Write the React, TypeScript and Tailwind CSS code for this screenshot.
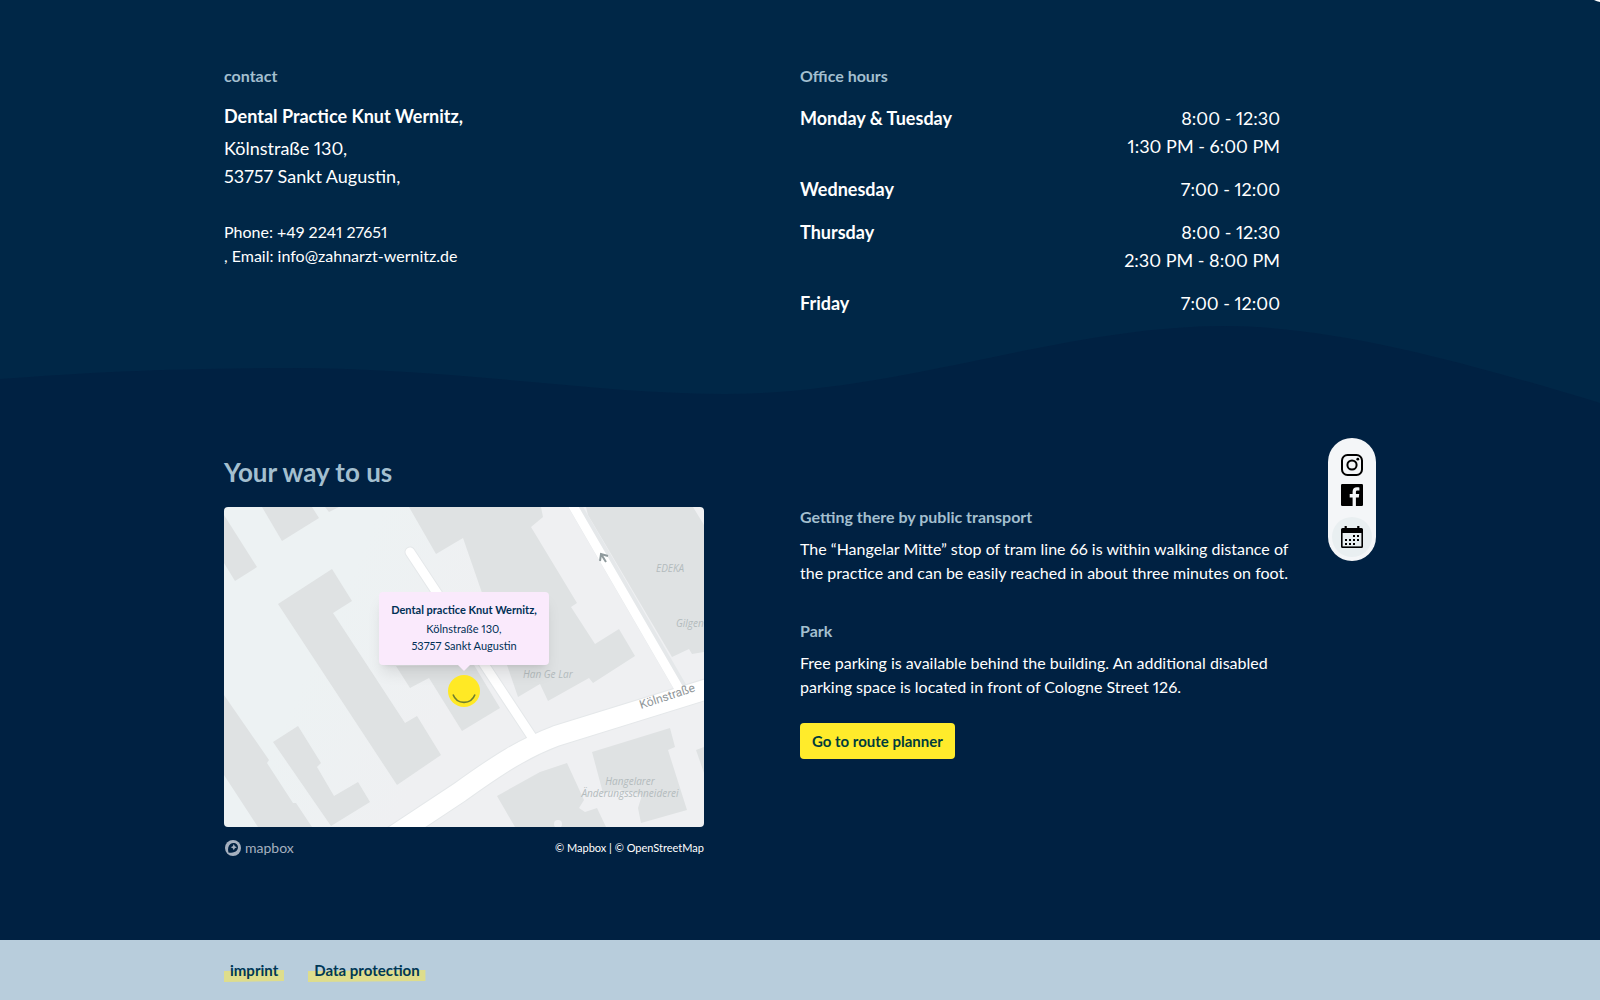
import type { ReactNode } from "react";

const hours = [
  { day: "Monday & Tuesday", times: ["8:00 - 12:30", "1:30 PM - 6:00 PM"] },
  { day: "Wednesday", times: ["7:00 - 12:00"] },
  { day: "Thursday", times: ["8:00 - 12:30", "2:30 PM - 8:00 PM"] },
  { day: "Friday", times: ["7:00 - 12:00"] },
];

const buildings = [
  "0,8 33,60 11,74 0,56",
  "38,0 88,0 95,11 58,34",
  "101,0 115,0 105,5",
  "54,97 108,62 128,94 109,106 181,216 193,209 217,248 173,278",
  "0,188 45,253 43,256 69,296 72,296 88,320 34,320 0,268",
  "49,235 74,219 97,256 93,260 110,289 134,275 146,295 107,319",
  "185,0 212,47 239,31 294,190 316,177 324,194 365,171 369,176 411,149 395,122 371,137 347,100 353,96 307,20 319,10 317,0",
  "172,159 186,181 205,171 238,224 276,201 250,158",
  "362,0 469,0 480,18 480,145 468,147 465,142 448,150 364,8",
  "273,289 316,265 343,256 360,293 355,301 361,305 373,301 382,320 291,320",
  "368,245 446,221 451,240 444,243 463,303 417,316 414,301 418,288 396,283 379,286",
  "472,243 480,240 480,266",
];

function SmallHeading({ children }: { children: ReactNode }) {
  return (
    <h3 className="text-base leading-6 font-bold text-[#a3bfcf]">
      {children}
    </h3>
  );
}

function StreetMap() {
  return (
    <svg
      viewBox="0 0 480 320"
      preserveAspectRatio="xMidYMid slice"
      className="block h-full w-full rounded"
      aria-hidden="true"
    >
      <defs>
        <linearGradient id="ground" x1="0" y1="0" x2="1" y2="0.3">
          <stop offset="0.3" stopColor="#edf2f3" />
          <stop offset="0.6" stopColor="#eff0f2" />
        </linearGradient>
      </defs>
      <rect width="480" height="320" fill="url(#ground)" />
      {buildings.map((points) => (
        <polygon key={points} points={points} fill="#dfe2e3" />
      ))}
      <circle cx="334" cy="317" r="4" fill="#eff0f2" />
      <g fill="none" strokeLinecap="round">
        <g stroke="#e5e8ea">
          <path d="M186 45L308 230" strokeWidth="11" />
          <path d="M347 -8L456 180" strokeWidth="13" />
          <path d="M165 332L236 285C275 257 300 241 332 229L490 180" strokeWidth="22" />
        </g>
        <g stroke="#ffffff">
          <path d="M186 45L308 230" strokeWidth="9" />
          <path d="M345 -8L454 180" strokeWidth="9" />
          <path d="M165 332L236 285C275 257 300 241 332 229L490 180" strokeWidth="20" />
        </g>
      </g>
      <path
        d="M382 55L377 47M376 54L377 47L384 49"
        stroke="#8f9a9d"
        strokeWidth="2"
        fill="none"
      />
      <g
        fill="#b3bbbd"
        fontFamily="'Open Sans', sans-serif"
        fontSize="10"
        fontStyle="italic"
      >
        <text x="432" y="65">EDEKA</text>
        <text x="452" y="120">Gilgen</text>
        <text x="299" y="171">Han Ge Lar</text>
        <text x="406" y="278" textAnchor="middle">Hangelarer</text>
        <text x="406" y="290" textAnchor="middle">Änderungsschneiderei</text>
      </g>
      <text
        x="417"
        y="202"
        transform="rotate(-18 417 202)"
        fill="#8f9699"
        fontFamily="Roboto, sans-serif"
        fontSize="12"
      >
        Kölnstraße
      </text>
    </svg>
  );
}

function InstagramIcon() {
  return (
    <svg viewBox="0 0 22 22" className="size-[22px]" fill="none" stroke="#000" strokeWidth="2">
      <rect x="1" y="1" width="20" height="20" rx="5.5" />
      <circle cx="11" cy="11" r="4.6" />
      <circle cx="16.8" cy="5.2" r="1.4" fill="#000" stroke="none" />
    </svg>
  );
}

function FacebookIcon() {
  return (
    <svg viewBox="0 0 22 22" className="size-[22px]">
      <rect width="22" height="22" rx="1.2" />
      <path
        d="M11.6 22V13.4H8.7V10.1H11.6V7.6C11.6 4.8 13.3 3.3 15.9 3.3C17.1 3.3 18.1 3.4 18.4 3.5V6.4H16.6C15.2 6.4 14.9 7.1 14.9 8.1V10.1H18.2L17.8 13.4H14.9V22Z"
        fill="#f4f6f8"
      />
    </svg>
  );
}

function CalendarIcon() {
  const dots = [
    [12, 9], [16, 9],
    [4, 13], [8, 13], [12, 13], [16, 13],
    [4, 17], [8, 17], [12, 17],
  ];
  return (
    <svg viewBox="0 0 22 22" className="size-[22px]">
      <path d="M1.5 2H3.6V0H5.8V2H16.2V0H18.4V2H20.5Q22 2 22 3.5V20.5Q22 22 20.5 22H1.5Q0 22 0 20.5V3.5Q0 2 1.5 2Z" />
      <rect x="1.6" y="7" width="18.8" height="13.4" fill="#e9eff1" />
      {dots.map(([x, y]) => (
        <rect key={`${x}-${y}`} x={x} y={y} width="2" height="2" />
      ))}
    </svg>
  );
}

function FooterLink({ children }: { children: ReactNode }) {
  return (
    <a href="#" className="relative isolate px-[6px] text-[15px] leading-6 font-bold text-[#003856]">
      <svg
        viewBox="0 0 100 12"
        preserveAspectRatio="none"
        className="absolute bottom-0 left-0 -z-10 h-3 w-full"
        aria-hidden="true"
      >
        <path d="M0 1L100 0L100 11L0 12Z" fill="#dedd8c" />
      </svg>
      {children}
    </a>
  );
}

export default function App() {
  return (
    <div className="relative flex min-h-screen flex-col bg-[#002142] font-['Lato',sans-serif] text-white proportional-nums">
      <svg viewBox="0 0 6 2" className="absolute top-0 right-0 h-[2px] w-[6px]" aria-hidden="true">
        <path d="M0 0H6V2Q3 1.5 0 0Z" fill="#fff" />
      </svg>

      {/* Contact and hours */}
      <section className="bg-[#002747] px-8 pt-16">
        <div className="mx-auto max-w-[1152px] pr-24">
          <div className="grid grid-cols-2 gap-24">
            <div>
              <SmallHeading>contact</SmallHeading>
              <address className="mt-3 not-italic">
                <strong className="mb-[2px] block text-lg leading-8 font-bold">
                  Dental Practice Knut Wernitz,
                </strong>
                <p className="text-lg leading-7">
                  Kölnstraße 130,
                  <br />
                  53757 Sankt Augustin,
                </p>
                <p className="mt-[30px] text-base leading-6">
                  Phone: <a href="tel:+49224127651">+49 2241 27651</a>
                  <br />, Email:{" "}
                  <a href="mailto:info@zahnarzt-wernitz.de">
                    info@zahnarzt-wernitz.de
                  </a>
                </p>
              </address>
            </div>
            <div>
              <SmallHeading>Office hours</SmallHeading>
              <dl className="mt-4 flex flex-col gap-[15px] text-lg leading-7">
                {hours.map(({ day, times }) => (
                  <div key={day} className="flex justify-between">
                    <dt className="font-bold">{day}</dt>
                    <dd className="text-right">
                      {times.map((time) => (
                        <span key={time} className="block">
                          {time}
                        </span>
                      ))}
                    </dd>
                  </div>
                ))}
              </dl>
            </div>
          </div>
        </div>
      </section>

      {/* Wave between the two blues */}
      <svg
        viewBox="0 0 1600 88"
        preserveAspectRatio="none"
        className="block h-[88px] w-full shrink-0"
        aria-hidden="true"
      >
        <path
          d="M0 0H1600V86C1480 50 1340 9 1225 9C1060 9 900 77 725 77C600 77 450 51 290 51C180 51 90 55 0 62Z"
          fill="#002747"
        />
      </svg>

      {/* Directions */}
      <section className="grow px-8 pb-20">
        <div className="mx-auto flex max-w-[1152px] gap-12">
          <div className="grid flex-1 grid-cols-2 gap-x-24">
            <h2 className="col-span-2 mt-[49px] mb-[17px] text-[26px] leading-9 font-bold text-[#a3bfcf]">
              Your way to us
            </h2>
            <div>
              <div className="relative h-80">
                <StreetMap />
                <div className="absolute inset-x-0 top-[85px] flex flex-col items-center">
                  <div className="rounded bg-[#faeafc] px-3 pt-[9px] pb-[11px] text-center text-[11px] leading-[17px] text-[#003055] shadow-lg">
                    <strong className="mb-[2px] block font-bold whitespace-nowrap">
                      Dental practice Knut Wernitz,
                    </strong>
                    Kölnstraße 130,
                    <br />
                    53757 Sankt Augustin
                  </div>
                  <svg viewBox="0 0 32 42" className="h-[42px] w-8" aria-hidden="true">
                    <path d="M10 0H22L16 6Z" fill="#faeafc" />
                    <circle cx="16" cy="26" r="16" fill="#ffe925" />
                    <path
                      d="M5 29.5C9 40 23 40 27 29.5"
                      fill="none"
                      stroke="#6d7d2f"
                      strokeWidth="1.6"
                    />
                  </svg>
                </div>
              </div>
              <div className="mt-[11px] flex items-center justify-between">
                <a
                  href="#"
                  className="flex items-center gap-[3px] text-sm leading-5 text-[#a5b0bf]"
                >
                  <svg viewBox="0 0 18 18" className="size-[18px]" aria-hidden="true">
                    <circle cx="9" cy="9" r="8" fill="#a5b0bf" />
                    <path
                      d="M4.4 13.5C3.5 9.5 4.3 6.5 6.4 4.9C8.4 3.4 11.2 3.6 12.8 5.3C14.5 7.1 14.4 9.8 12.8 11.6C11 13.6 8 14.1 4.4 13.5Z"
                      fill="#002142"
                    />
                    <path
                      d="M9.8 5.1L10.8 7.2L12.9 8.2L10.8 9.2L9.8 11.3L8.8 9.2L6.7 8.2L8.8 7.2Z"
                      fill="#a5b0bf"
                    />
                  </svg>
                  mapbox
                </a>
                <p className="text-[11px] leading-5">
                  © <a href="#">Mapbox</a> | © <a href="#">OpenStreetMap</a>
                </p>
              </div>
            </div>
            <div className="-mt-[2px] -mr-3 text-base leading-6">
              <SmallHeading>Getting there by public transport</SmallHeading>
              <p className="mt-2">
                The “Hangelar Mitte” stop of tram line 66 is within walking
                distance of the practice and can be easily reached in about
                three minutes on foot.
              </p>
              <div className="mt-[34px]">
                <SmallHeading>Park</SmallHeading>
              </div>
              <p className="mt-2">
                Free parking is available behind the building. An additional
                disabled parking space is located in front of Cologne Street
                126.
              </p>
              <button
                type="button"
                className="mt-6 h-9 rounded bg-[#ffeb2b] px-3 text-[15px] font-bold text-[#003c3c]"
              >
                Go to route planner
              </button>
            </div>
          </div>
          <nav
            aria-label="Social"
            className="mt-[33px] flex h-[123px] w-12 flex-col items-center rounded-full bg-[#f4f6f8] pt-4"
          >
            <a href="#" aria-label="Instagram">
              <InstagramIcon />
            </a>
            <a href="#" aria-label="Facebook" className="mt-2">
              <FacebookIcon />
            </a>
            <a
              href="#"
              aria-label="Book an appointment"
              className="mt-[11px] flex size-10 shrink-0 items-center justify-center rounded-full bg-[#e9eff1]"
            >
              <CalendarIcon />
            </a>
          </nav>
        </div>
      </section>

      <footer className="bg-[#b8cddc] px-8">
        <div className="mx-auto flex h-[60px] max-w-[1152px] items-center gap-6">
          <FooterLink>imprint</FooterLink>
          <FooterLink>Data protection</FooterLink>
        </div>
      </footer>
    </div>
  );
}
